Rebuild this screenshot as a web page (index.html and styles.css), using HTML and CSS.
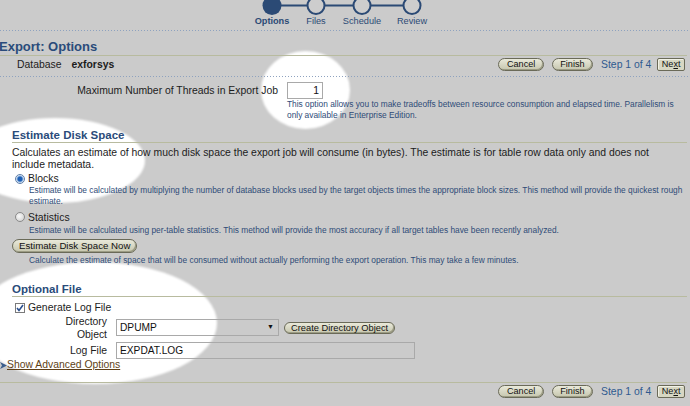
FILE: index.html
```html
<!DOCTYPE html>
<html lang="en">
<head>
    <meta charset="UTF-8">
    <title>Export: Options</title>
    <link rel="stylesheet" href="styles.css">
</head>
<body>

    <!-- spotlight highlights drawn over the greyed page -->
    <div class="spot spot-threads"></div>
    <div class="spot spot-estimate"></div>
    <div class="spot spot-logfile"></div>

    <!-- wizard train -->
    <div class="train">
        <svg class="track" width="183" height="15" viewBox="0 0 183 15">
            <line x1="22" y1="5.5" x2="162" y2="5.5" stroke="#2b4a75" stroke-width="2"/>
            <circle cx="22" cy="5.5" r="9.5" fill="#2b4a75"/>
            <circle cx="66" cy="5.5" r="8.5" fill="#cdcdcd" stroke="#2b4a75" stroke-width="2"/>
            <circle cx="112" cy="5.5" r="8.5" fill="#cdcdcd" stroke="#2b4a75" stroke-width="2"/>
            <circle cx="162" cy="5.5" r="8.5" fill="#cdcdcd" stroke="#2b4a75" stroke-width="2"/>
        </svg>
        <div class="train-labels">
            <span class="current">Options</span>
            <span>Files</span>
            <span>Schedule</span>
            <span>Review</span>
        </div>
    </div>
    <div class="dots"></div>

    <h1 class="page-title">Export: Options</h1>
    <div class="db-row">
        <span>Database</span>
        <span class="db-name">exforsys</span>
        <div class="actions">
            <button class="btn">Cancel</button>
            <button class="btn">Finish</button>
            <span class="step">Step 1 of 4</span>
            <button class="btn btn-next">Ne<u>x</u>t</button>
        </div>
    </div>
    <div class="dots"></div>

    <div class="threads">
        <label for="threads">Maximum Number of Threads in Export Job</label>
        <input class="num-input" id="threads" type="text" value="1">
        <p class="help">This option allows you to make tradeoffs between resource consumption and elapsed time. Parallelism is only available in Enterprise Edition.</p>
    </div>

    <!-- Estimate Disk Space -->
    <div class="section">
        <h2 class="section-title">Estimate Disk Space</h2>
        <p class="intro">Calculates an estimate of how much disk space the export job will consume (in bytes). The estimate is for table row data only and does not include metadata.</p>

        <div class="choice">
            <span class="radio checked"></span>
            <span>Blocks</span>
        </div>
        <p class="help indent help-blocks">Estimate will be calculated by multiplying the number of database blocks used by the target objects times the appropriate block sizes. This method will provide the quickest rough estimate.</p>

        <div class="choice choice-gap">
            <span class="radio"></span>
            <span>Statistics</span>
        </div>
        <p class="help indent help-gap">Estimate will be calculated using per-table statistics. This method will provide the most accuracy if all target tables have been recently analyzed.</p>

        <button class="btn btn-estimate">Estimate Disk Space Now</button>
        <p class="help indent help-gap">Calculate the estimate of space that will be consumed without actually performing the export operation. This may take a few minutes.</p>
    </div>

    <!-- Optional File -->
    <div class="section">
        <h2 class="section-title section-optional">Optional File</h2>
        <div class="choice check-row">
            <span class="checkbox">
                <svg width="8" height="8" viewBox="0 0 8 8"><path d="M1 4 L3 6.5 L7 1" fill="none" stroke="#2a4f8f" stroke-width="1.6"/></svg>
            </span>
            <span>Generate Log File</span>
        </div>
        <div class="file-grid">
            <label>Directory<br>Object</label>
            <div class="dir-cell">
                <span class="select-wrap">
                    <select class="dir-select">
                        <option>DPUMP</option>
                    </select>
                </span>
                <button class="btn btn-small">Create Directory Object</button>
            </div>
            <label for="logfile">Log File</label>
            <input class="text-input" id="logfile" type="text" value="EXPDAT.LOG">
        </div>
    </div>

    <div class="advanced">
        <svg width="7" height="8" viewBox="0 0 7 8"><polygon points="0,1 7,4.5 0,8 2,4.5" fill="#3b5e8c"/></svg>
        <a href="#">Show Advanced Options</a>
    </div>

    <div class="rule"></div>
    <div class="actions bottom-actions">
        <button class="btn">Cancel</button>
        <button class="btn">Finish</button>
        <span class="step">Step 1 of 4</span>
        <button class="btn btn-next">Ne<u>x</u>t</button>
    </div>

</body>
</html>
```

FILE: styles.css
```css
* {
    box-sizing: border-box;
}
body {
    margin: 0;
    background: #cbcbcb;
    font-family: "Liberation Sans", Arial, sans-serif;
    font-size: 10.4px;
    color: #1c1c1c;
    overflow: hidden;
}
p {
    margin: 0;
}

/* spotlights */
.spot {
    position: absolute;
    z-index: -1;
    background: #fff;
    border-radius: 50%;
    filter: blur(1px);
}
.spot-threads {
    left: 261px;
    top: 51px;
    width: 89px;
    height: 78px;
}
.spot-estimate {
    left: -35px;
    top: 118px;
    width: 180px;
    height: 85px;
}
.spot-logfile {
    left: -27px;
    top: 262px;
    width: 244px;
    height: 122px;
}

/* train */
.train {
    width: 183px;
    height: 30px;
    margin-left: 250px;
}
.track {
    display: block;
}
.train-labels {
    display: grid;
    grid-template-columns: 44px 44px 48px 52px;
    text-align: center;
    font-size: 9.2px;
    line-height: 12px;
    color: #2b4a75;
}
.train-labels .current {
    font-weight: bold;
}
.dots {
    height: 1px;
    background: repeating-linear-gradient(90deg, #8ea2bf 0 1px, transparent 1px 3px);
}

/* header */
.page-title {
    margin: 8px 3px 0 -1px;
    padding-bottom: 1px;
    font-size: 13px;
    line-height: 15px;
    color: #2a4b7a;
    border-bottom: 1px solid #b8bb9f;
}
.db-row {
    display: flex;
    align-items: center;
    height: 17px;
    margin-bottom: 3px;
    padding: 0 5px 0 17px;
}
.db-name {
    font-weight: bold;
    margin-left: 10px;
}
.actions {
    display: flex;
    align-items: center;
    gap: 8px;
    margin-left: auto;
}
.step {
    color: #2f5a8f;
    margin-right: -2px;
}

/* buttons */
.btn {
    height: 13px;
    padding: 0 7.5px;
    font-family: "Liberation Sans", Arial, sans-serif;
    font-size: 9.1px;
    line-height: 11px;
    color: #111;
    border: 1px solid #6a6a58;
    border-radius: 7px;
    background: linear-gradient(#e9e9da, #c6c6ae);
    box-shadow: inset -1px -1px 0 #9c9c84;
}
.btn-next {
    padding: 0 3.5px;
    border-radius: 2px;
    background: #d7d7c3;
    box-shadow: inset 1px 1px 0 #f2f2e6;
}

/* threads */
.threads {
    display: grid;
    grid-template-columns: 278px 1fr;
    column-gap: 9px;
    margin-top: 5px;
}
.threads label {
    text-align: right;
    align-self: center;
}
.num-input {
    width: 36px;
    height: 17px;
    padding: 0 3px;
    border: 1px solid #a9a9a9;
    background: transparent;
    text-align: right;
    font-family: "Liberation Sans", Arial, sans-serif;
    font-size: 10.4px;
    color: #111;
}
.help {
    font-size: 8.35px;
    line-height: 11px;
    color: #2f4c78;
}
.threads .help {
    grid-column: 2;
    max-width: 395px;
}

/* sections */
.section {
    margin: 0 3px 0 12px;
}
.section-title {
    margin: 7px 0 0;
    font-size: 11.5px;
    line-height: 14px;
    color: #2a4b7a;
    border-bottom: 1px solid #b8bb9f;
}
.section-optional {
    margin-top: 17px;
}
.intro {
    margin-top: 4px;
    line-height: 11.5px;
    max-width: 650px;
}
.choice {
    display: flex;
    align-items: center;
    gap: 3px;
    margin-top: 2px;
    padding-left: 3px;
    line-height: 13px;
}
.choice-gap {
    margin-top: 4.5px;
}
.indent {
    margin-left: 17px;
    line-height: 10.5px;
}
.help-blocks {
    max-width: 657px;
}
.help-gap {
    margin-top: 1.5px;
}
.radio {
    width: 10px;
    height: 10px;
    border-radius: 50%;
    border: 1px solid #8a8a8a;
    background: radial-gradient(circle at 40% 40%, #fafafa, #c9c9c9);
}
.radio.checked {
    border-color: #5f7fa8;
    background: radial-gradient(circle, #1d5fb5 0 2px, #8fb4e0 3px, #eef3fa 4px);
}
.btn-estimate {
    display: block;
    height: 14px;
    margin-top: 3.5px;
    padding: 0 6px;
    font-size: 9.7px;
    line-height: 12px;
}

/* optional file */
.check-row {
    margin-top: 4px;
}
.checkbox {
    width: 10px;
    height: 10px;
    border: 1px solid #7a7a7a;
    background: #fff;
    display: flex;
    align-items: center;
    justify-content: center;
}
.file-grid {
    display: grid;
    grid-template-columns: 95px 1fr;
    column-gap: 9px;
    row-gap: 1px;
    align-items: center;
    margin-top: 0.5px;
}
.file-grid label {
    text-align: right;
    line-height: 13px;
}
.dir-cell {
    display: flex;
    align-items: center;
    gap: 5px;
}
.select-wrap {
    position: relative;
    display: block;
}
.select-wrap::after {
    content: "\25BC";
    position: absolute;
    right: 5px;
    top: 4px;
    font-size: 7px;
    color: #111;
}
.dir-select,
.text-input {
    height: 17px;
    padding: 0 0 0 3px;
    border: 1px solid #a9a9a9;
    border-radius: 0;
    background: transparent;
    font-family: "Liberation Sans", Arial, sans-serif;
    font-size: 10.2px;
    color: #111;
}
.dir-select {
    width: 163px;
    appearance: none;
}
.text-input {
    width: 299px;
}
.btn-small {
    height: 12px;
    padding: 0 6px;
    font-size: 9.3px;
    line-height: 10px;
}

.advanced {
    display: flex;
    align-items: center;
    height: 12px;
    margin-top: 0.5px;
}
.advanced a {
    color: #5e3f16;
    line-height: 12px;
}
.rule {
    margin: 11px 3px 0 0;
    border-top: 1px solid #b8bb9f;
}
.bottom-actions {
    height: 16px;
    justify-content: flex-end;
    padding-right: 5px;
}
```
